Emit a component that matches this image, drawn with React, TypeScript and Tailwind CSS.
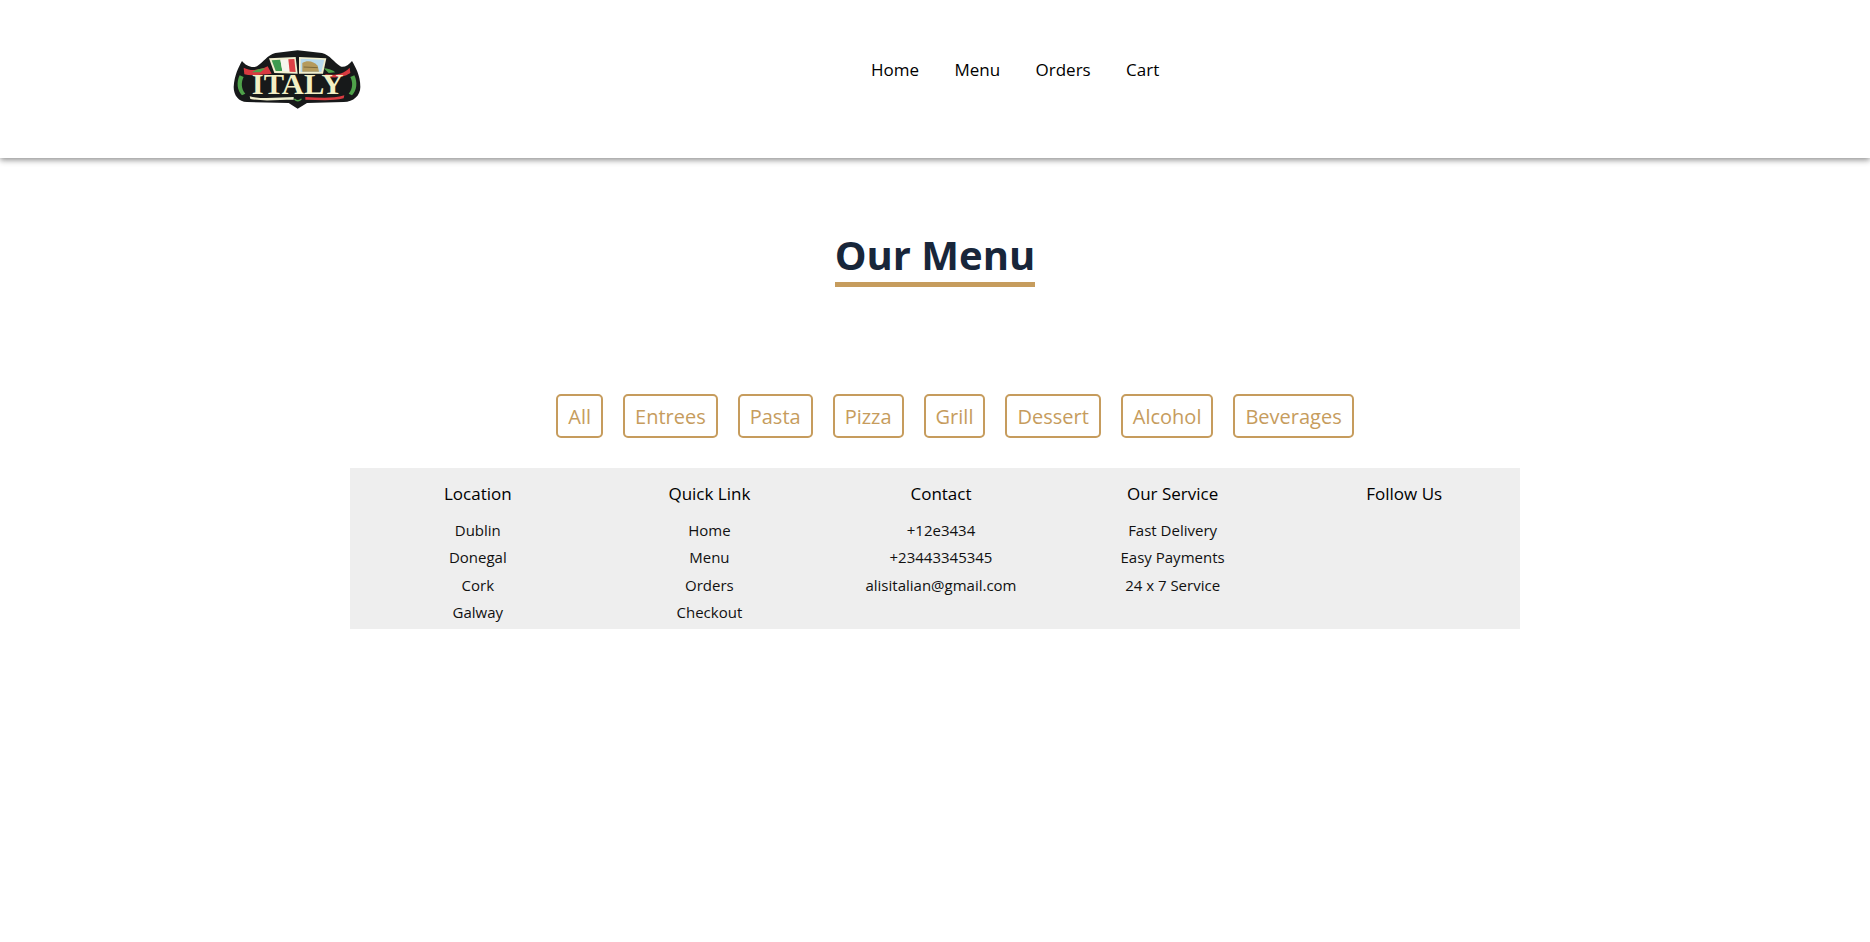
const navLinks = ["Home", "Menu", "Orders", "Cart"];
const categories = ["All", "Entrees", "Pasta", "Pizza", "Grill", "Dessert", "Alcohol", "Beverages"];

const footerCols = [
  { title: "Location", items: ["Dublin", "Donegal", "Cork", "Galway"] },
  { title: "Quick Link", items: ["Home", "Menu", "Orders", "Checkout"] },
  { title: "Contact", items: ["+12e3434", "+23443345345", "alisitalian@gmail.com"] },
  { title: "Our Service", items: ["Fast Delivery", "Easy Payments", "24 x 7 Service"] },
  { title: "Follow Us", items: [] as string[] },
];

function Logo() {
  return (
    <svg width="134" height="65" viewBox="60 50 400 195" className="block">
      {/* badge */}
      <path
        d="M70 170 C72 135 85 110 95 92 C105 105 125 115 140 108 C160 95 170 75 195 68 L262 60 L335 68 C360 75 370 95 390 108 C400 113 415 105 425 92 C435 110 450 135 450 170 C450 195 430 215 400 215 L290 218 L262 235 L235 218 L110 215 C85 215 70 195 70 170 Z"
        fill="#17191a"
      />
      {/* flag */}
      <path d="M176 84 L256 80 L262 130 L192 128 Z" fill="#f1efcf" />
      <path d="M184 90 L210 88 L216 122 L196 122 Z" fill="#3c9b50" />
      <path d="M210 88 L234 87 L238 124 L216 122 Z" fill="#f6f5ee" />
      <path d="M234 87 L252 86 L256 125 L238 124 Z" fill="#dd3f45" />
      {/* colosseum picture */}
      <path d="M266 80 L348 84 L338 130 L266 130 Z" fill="#f1efcf" />
      <path d="M271 85 L342 88 L333 125 L271 125 Z" fill="#b7d9ec" />
      <path d="M276 124 L276 98 C290 88 310 92 322 106 L326 124 Z" fill="#b59a5c" />
      <path d="M280 110 L322 112" stroke="#7d6a3c" strokeWidth="3" />
      {/* side ribbons */}
      <path d="M88 135 C78 155 80 180 95 195 L105 190 C92 175 92 155 100 140 Z" fill="#4fa24a" />
      <path d="M432 135 C442 155 440 180 425 195 L415 190 C428 175 428 155 420 140 Z" fill="#4fa24a" />
      <path d="M100 112 C125 125 150 118 172 108 L184 130 C155 132 125 138 102 132 Z" fill="#d93a40" />
      <path d="M345 132 C370 135 395 135 418 112 L420 128 C395 145 370 142 345 140 Z" fill="#d93a40" />
      <path d="M125 126 C135 118 150 114 165 114 L150 126 Z" fill="#4fa24a" />
      <path d="M375 126 C365 118 350 114 340 114 L355 128 Z" fill="#4fa24a" />
      {/* bottom bands */}
      <path d="M118 198 C160 208 210 200 250 200 L250 208 C205 208 160 214 120 206 Z" fill="#f1efcf" />
      <path d="M285 200 C325 202 365 206 402 195 L400 204 C365 213 325 209 285 208 Z" fill="#d93a40" />
      <path d="M250 205 C255 216 270 216 275 205 L270 205 C266 210 259 210 255 205 Z" fill="#4fa24a" />
      <text
        x="262"
        y="192"
        textAnchor="middle"
        fontFamily="'Liberation Serif', serif"
        fontWeight="700"
        fontSize="88"
        textLength="275"
        lengthAdjust="spacingAndGlyphs"
        fill="#f3efc4"
      >
        ITALY
      </text>
    </svg>
  );
}

export default function App() {
  return (
    <div className="min-h-[942px] bg-white font-['Open_Sans','Noto_Sans',sans-serif] text-black">
      {/* navbar */}
      <header className="h-[158px] bg-white shadow-[0_2px_6px_rgba(0,0,0,0.45)] flex items-start pl-[230px]">
        <div className="mt-[47px] w-[641px] shrink-0">
          <Logo />
        </div>
        <nav className="mt-[57px] flex gap-[35.4px] text-[17px] leading-[25px]">
          {navLinks.map((link) => (
            <a key={link} href="#">
              {link}
            </a>
          ))}
        </nav>
      </header>

      {/* menu heading */}
      <div className="flex justify-center pt-[71px]">
        <h1 className="text-[40px] leading-[52px] font-bold text-[#18263a] pb-[1px] border-b-[5px] border-[#c69c5d]">
          Our Menu
        </h1>
      </div>

      {/* categories */}
      <div className="mt-[107px] flex justify-center gap-[20px] pl-[40px]">
        {categories.map((cat) => (
          <button
            key={cat}
            className="h-[44px] px-[10px] pt-[2px] rounded-[5px] border-2 border-[#c69c5d] text-[#c69c5d] text-[20px] leading-none"
          >
            {cat}
          </button>
        ))}
      </div>

      {/* footer */}
      <footer className="mt-[30px] ml-[350px] w-[1170px] h-[161px] bg-[#eeeeee] grid grid-cols-5 pl-[12px] pt-[13px]">
        {footerCols.map((col) => (
          <div key={col.title} className="text-center">
            <h4 className="text-[17px] leading-[25px] mb-[11px]">{col.title}</h4>
            <ul className="text-[15px] leading-[27.4px] text-[#111111]">
              {col.items.map((item) => (
                <li key={item}>{item}</li>
              ))}
            </ul>
          </div>
        ))}
      </footer>
    </div>
  );
}
